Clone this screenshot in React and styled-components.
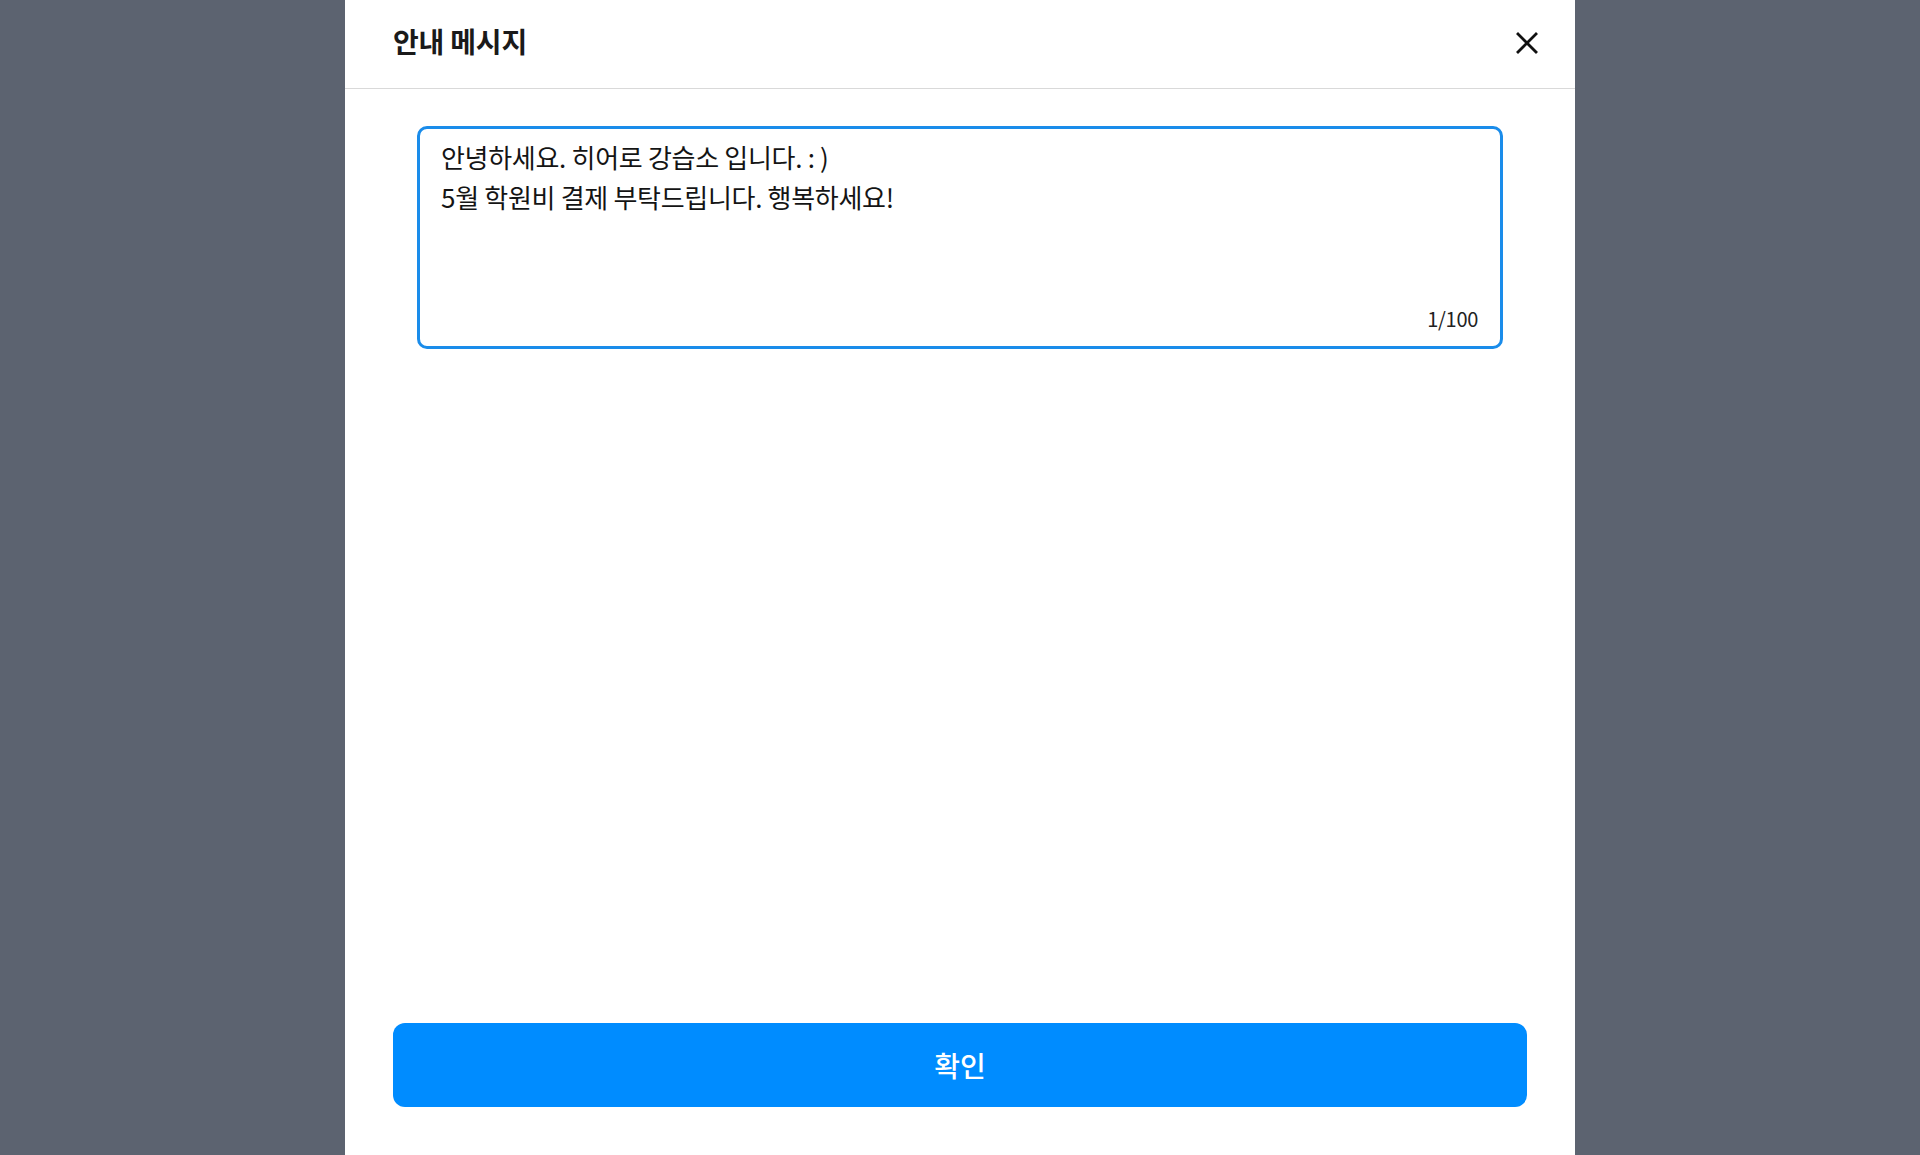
import styled, { createGlobalStyle } from "styled-components";
import { useState } from "react";

const GlobalStyle = createGlobalStyle`
  html, body {
    margin: 0;
    padding: 0;
    background: #5c6370;
  }
  * {
    box-sizing: border-box;
  }
  body {
    font-family: "Noto Sans CJK KR", "Noto Sans", sans-serif;
  }
`;

export default function App() {
  const [message, setMessage] = useState(
    "안녕하세요. 히어로 강습소 입니다. : )\n5월 학원비 결제 부탁드립니다. 행복하세요!"
  );

  return (
    <>
      <GlobalStyle />
      <Overlay>
        <Modal>
          <Header>
            <Title>안내 메시지</Title>
            <CloseButton aria-label="닫기">
              <svg width="22" height="22" viewBox="0 0 22 22">
                <path
                  d="M2 2 L20 20 M20 2 L2 20"
                  stroke="#111"
                  strokeWidth="2.8"
                  strokeLinecap="square"
                />
              </svg>
            </CloseButton>
          </Header>
          <Body>
            <TextBox>
              <TextArea
                value={message}
                onChange={(e) => setMessage(e.target.value)}
              />
              <Counter>1/100</Counter>
            </TextBox>
          </Body>
          <Footer>
            <ConfirmButton>확인</ConfirmButton>
          </Footer>
        </Modal>
      </Overlay>
    </>
  );
}

const Overlay = styled.div`
  width: 100%;
  height: 1155px;
  display: flex;
  justify-content: center;
`;

const Modal = styled.div`
  width: 1230px;
  height: 100%;
  background: #ffffff;
  display: flex;
  flex-direction: column;
`;

const Header = styled.div`
  height: 89px;
  flex-shrink: 0;
  display: flex;
  align-items: center;
  justify-content: space-between;
  padding: 0 37px 6px 48px;
  border-bottom: 1px solid #d9d9d9;
`;

const Title = styled.h2`
  margin: 0;
  font-size: 28px;
  font-weight: 700;
  letter-spacing: -0.2px;
  color: #1a1a1a;
`;

const CloseButton = styled.button`
  border: none;
  background: none;
  padding: 0;
  width: 22px;
  height: 22px;
  margin-top: 4px;
  display: flex;
  cursor: pointer;
`;

const Body = styled.div`
  flex: 1;
  padding: 37px 72px 0;
`;

const TextBox = styled.div`
  position: relative;
  height: 223px;
  border: 3px solid #1a8cea;
  border-radius: 10px;
`;

const TextArea = styled.textarea`
  width: 100%;
  height: 100%;
  border: none;
  outline: none;
  resize: none;
  padding: 8px 21px;
  background: transparent;
  font-family: "Noto Sans CJK KR", "Noto Sans", sans-serif;
  font-size: 26px;
  line-height: 40px;
  letter-spacing: -0.3px;
  color: #141414;
`;

const Counter = styled.span`
  position: absolute;
  right: 22px;
  bottom: 13px;
  font-family: "Noto Sans CJK KR", "Noto Sans", sans-serif;
  font-size: 20px;
  color: #222222;
  letter-spacing: -0.3px;
`;

const Footer = styled.div`
  padding: 0 48px 48px;
`;

const ConfirmButton = styled.button`
  width: 100%;
  height: 84px;
  border: none;
  border-radius: 12px;
  background: #008cff;
  color: #ffffff;
  font-family: "Noto Sans CJK KR", "Noto Sans", sans-serif;
  font-size: 28px;
  font-weight: 500;
  padding-bottom: 2px;
  cursor: pointer;
`;
